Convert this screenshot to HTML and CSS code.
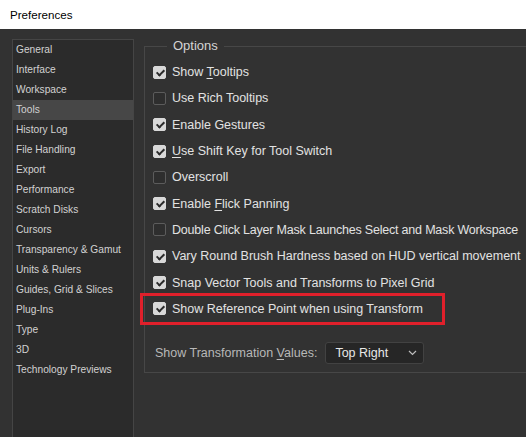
FILE: index.html
```html
<!DOCTYPE html>
<html>
<head>
<meta charset="utf-8">
<title>Preferences</title>
<link rel="stylesheet" href="styles.css">
</head>
<body>
<div class="titlebar">Preferences</div>
<div class="main">
  <ul class="sidebar">
    <li>General</li>
    <li>Interface</li>
    <li>Workspace</li>
    <li class="active">Tools</li>
    <li>History Log</li>
    <li>File Handling</li>
    <li>Export</li>
    <li>Performance</li>
    <li>Scratch Disks</li>
    <li>Cursors</li>
    <li>Transparency &amp; Gamut</li>
    <li>Units &amp; Rulers</li>
    <li>Guides, Grid &amp; Slices</li>
    <li>Plug-Ins</li>
    <li>Type</li>
    <li>3D</li>
    <li>Technology Previews</li>
  </ul>
  <div class="content">
    <fieldset class="group">
      <legend>Options</legend>
      <div class="row"><span class="cb on"></span><span>Show <u>T</u>ooltips</span></div>
      <div class="row"><span class="cb"></span><span>Use Rich Tooltips</span></div>
      <div class="row"><span class="cb on"></span><span>Enable Gestures</span></div>
      <div class="row"><span class="cb on"></span><span><u>U</u>se Shift Key for Tool Switch</span></div>
      <div class="row"><span class="cb"></span><span>Overscroll</span></div>
      <div class="row"><span class="cb on"></span><span>Enable <u>F</u>lick Panning</span></div>
      <div class="row tight"><span class="cb"></span><span>Double Click Layer Mask Launches Select and Mask Workspace</span></div>
      <div class="row"><span class="cb on"></span><span>Vary Round Brush Hardness based on HUD vertical movement</span></div>
      <div class="row"><span class="cb on"></span><span>Snap Vector Tools and Transforms to Pixel Grid</span></div>
      <div class="row highlight"><span class="cb on"></span><span>Show Reference Point when using Transform</span></div>
      <div class="values">
        <span class="vlabel">Show Transformation <u>V</u>alues:</span>
        <div class="select"><span>Top Right</span><svg width="9" height="6" viewBox="0 0 9 6"><path d="M1 1 L4.5 4.5 L8 1" fill="none" stroke="#bdbdbd" stroke-width="1.2"/></svg></div>
      </div>
    </fieldset>
  </div>
</div>
</body>
</html>
```

FILE: styles.css
```css
html, body {
  margin: 0;
  padding: 0;
  width: 526px;
  height: 437px;
  overflow: hidden;
  background: #323232;
  font-family: "Liberation Sans", Arial, sans-serif;
}

.titlebar {
  height: 29px;
  background: #ffffff;
  color: #000000;
  font-size: 11.6px;
  line-height: 29px;
  padding-left: 10px;
  box-sizing: border-box;
}

.main {
  display: flex;
  align-items: flex-start;
  padding-left: 12px;
  padding-top: 10px;
  height: 408px;
  overflow: hidden;
  box-sizing: border-box;
}

.sidebar {
  list-style: none;
  margin: 0;
  padding: 0;
  width: 122px;
  height: 420px;
  box-sizing: border-box;
  background: #2b2b2b;
  border: 1px solid #454545;
}

.sidebar li {
  height: 20px;
  line-height: 19px;
  font-size: 10.2px;
  color: #d2d2d2;
  padding-left: 3px;
}

.sidebar li.active {
  background: #474747;
}

.content {
  flex: 1;
  margin-left: 10px;
  margin-right: -30px;
}

.group {
  margin: 0;
  border: 1px solid #474747;
  padding: 6px 0 8px 8px;
  min-width: 0;
}

.group legend {
  margin-left: 14px;
  padding: 0 6px;
  color: #d4d4d4;
  font-size: 13px;
  line-height: 14px;
}

.row {
  display: flex;
  align-items: center;
  height: 26.3px;
  color: #e2e2e2;
  font-size: 12.5px;
  white-space: nowrap;
}

.row.tight {
  letter-spacing: -0.2px;
}

.row u, .values u {
  text-decoration: underline;
  text-underline-offset: 2px;
}

.cb {
  width: 13px;
  height: 13px;
  box-sizing: border-box;
  border-radius: 2px;
  border: 1px solid #5c5c5c;
  background: #2e2e2e;
  margin-right: 6px;
  flex: none;
  position: relative;
}

.cb.on {
  background: #d8d8d8;
  border-color: #d8d8d8;
}

.cb.on::after {
  content: "";
  position: absolute;
  left: 3.5px;
  top: 1px;
  width: 3px;
  height: 6px;
  border-right: 2px solid #2a2a2a;
  border-bottom: 2px solid #2a2a2a;
  transform: rotate(45deg);
}

.row.highlight {
  width: 299px;
  box-sizing: border-box;
  margin-left: -10px;
  padding-left: 10px;
  outline: 3px solid #e0202b;
}

.values {
  display: flex;
  align-items: center;
  margin-top: 20px;
  margin-left: 2px;
  height: 22px;
}

.vlabel {
  color: #b8b8b8;
  font-size: 12.5px;
  margin-right: 8px;
}

.select {
  width: 99px;
  height: 22px;
  box-sizing: border-box;
  background: #262626;
  border: 1px solid #424242;
  border-radius: 3px;
  display: flex;
  align-items: center;
  justify-content: space-between;
  padding: 0 6px 0 9px;
  color: #e8e8e8;
  font-size: 12.5px;
}
```
